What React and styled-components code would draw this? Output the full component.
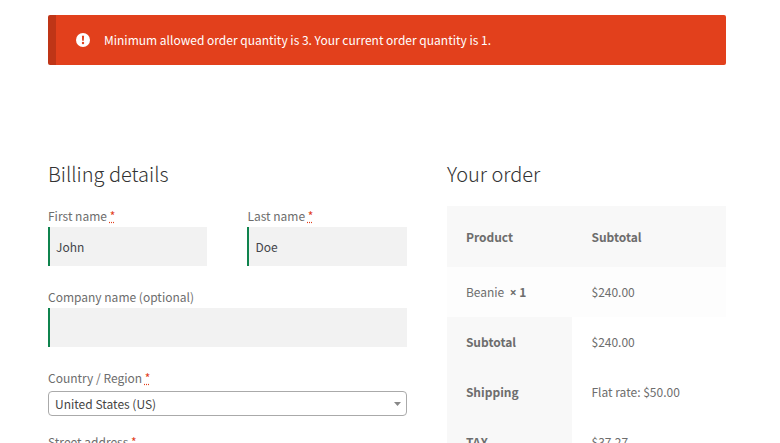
import React from "react";
import styled, { createGlobalStyle } from "styled-components";

const GlobalStyle = createGlobalStyle`
  *, *::before, *::after { box-sizing: border-box; }
  body {
    margin: 0;
    background: #fff;
    color: #6d6d6d;
    font-family: "Noto Sans CJK SC", "Noto Sans", sans-serif;
    font-size: 12px;
    line-height: 20px;
  }
`;

const Page = styled.main`
  height: 100vh;
  overflow: hidden;
  padding: 15px 54px 0 48px;
`;

const Notice = styled.div`
  display: flex;
  align-items: center;
  gap: 14px;
  min-height: 50px;
  padding: 0 20px;
  border-left: 8px solid #bf3517;
  border-radius: 2px;
  background: #e2401c;
  color: #fff;
`;

const NoticeIcon = styled.svg`
  flex: none;
  width: 14px;
  height: 14px;
`;

const Checkout = styled.form`
  display: grid;
  grid-template-columns: 9fr 7fr;
  gap: 40px;
  margin-top: 93px;
`;

const Section = styled.section`
  min-width: 0;
`;

const Heading = styled.h3`
  margin: 0 0 16px;
  color: #333;
  font-size: 20px;
  font-weight: 300;
  line-height: 32px;
`;

const Fields = styled.div`
  display: grid;
  grid-template-columns: 1fr 1fr;
  column-gap: 40px;
`;

const Field = styled.div`
  display: flex;
  flex-direction: column;
  min-width: 0;
  margin-bottom: ${({ $compact }) => ($compact ? "16px" : "21px")};
  grid-column: ${({ $wide }) => ($wide ? "1 / -1" : "auto")};
`;

const Label = styled.label`
  line-height: 20px;
  margin-bottom: ${({ $spaced }) => ($spaced ? "3px" : "1px")};
`;

const Required = styled.abbr`
  color: #e2401c;
  text-decoration: underline dotted;
`;

const TextInput = styled.input`
  width: 100%;
  height: 39px;
  padding: 0 6px;
  border: 0;
  border-left: 2px solid #0f834d;
  border-radius: 0;
  background: #f2f2f2;
  color: #43454b;
  font: inherit;
`;

const SelectWrap = styled.div`
  display: grid;
  align-items: center;
`;

const Select = styled.select`
  grid-area: 1 / 1;
  appearance: none;
  width: 100%;
  height: 25px;
  padding: 0 24px 0 6px;
  border: 1px solid #aaa;
  border-radius: 4px;
  background: #fff;
  color: #444;
  font: inherit;
`;

const SelectArrow = styled.svg`
  grid-area: 1 / 1;
  justify-self: end;
  width: 7px;
  height: 4px;
  margin-right: 6px;
  pointer-events: none;
`;

const OrderTable = styled.table`
  width: 100%;
  table-layout: fixed;
  border-collapse: collapse;
`;

const Cell = styled.td`
  height: ${({ $head }) => ($head ? "61px" : "50px")};
  padding: 0 19px;
  background: ${({ $tone }) => $tone || "#fff"};
  font-weight: ${({ $bold }) => ($bold ? 700 : 400)};
  text-align: left;
  vertical-align: middle;
  white-space: nowrap;
`;

const ProductColumn = styled.col`
  width: 45%;
`;

const Times = styled.span`
  font-family: "Open Sans", sans-serif;
`;

const totals = [
  ["Subtotal", "$240.00"],
  ["Shipping", "Flat rate: $50.00"],
  ["TAX", "$37.27"],
];

function FieldLabel({ id, text, required, spaced }) {
  return (
    <Label htmlFor={id} $spaced={spaced}>
      {text}
      {required && <> <Required title="required">*</Required></>}
    </Label>
  );
}

function TextField({ id, label, value, required, wide }) {
  return (
    <Field $wide={wide}>
      <FieldLabel id={id} text={label} required={required} />
      <TextInput id={id} type="text" defaultValue={value} />
    </Field>
  );
}

export default function App() {
  return (
    <>
      <GlobalStyle />
      <Page>
        <Notice role="alert">
          <NoticeIcon viewBox="0 0 14 14" aria-hidden="true">
            <circle cx="7" cy="7" r="7" fill="#fff" />
            <path d="M5.9 2.8h2.2l-.3 5H6.2z" fill="#e2401c" />
            <circle cx="7" cy="10" r="1.2" fill="#e2401c" />
          </NoticeIcon>
          <span>Minimum allowed order quantity is 3. Your current order quantity is 1.</span>
        </Notice>
        <Checkout>
          <Section>
            <Heading>Billing details</Heading>
            <Fields>
              <TextField id="first-name" label="First name" value="John" required />
              <TextField id="last-name" label="Last name" value="Doe" required />
              <TextField id="company" label="Company name (optional)" value="" wide />
              <Field $wide $compact>
                <FieldLabel id="country" text="Country / Region" required spaced />
                <SelectWrap>
                  <Select id="country" defaultValue="US">
                    <option value="US">United States (US)</option>
                  </Select>
                  <SelectArrow viewBox="0 0 7 4" aria-hidden="true">
                    <path d="M0 0h7L3.5 4z" fill="#888" />
                  </SelectArrow>
                </SelectWrap>
              </Field>
              <TextField id="street" label="Street address" value="" required wide />
            </Fields>
          </Section>
          <Section>
            <Heading>Your order</Heading>
            <OrderTable>
              <colgroup>
                <ProductColumn />
                <col />
              </colgroup>
              <thead>
                <tr>
                  <Cell as="th" scope="col" $head $bold $tone="#f8f8f8">Product</Cell>
                  <Cell as="th" scope="col" $head $bold $tone="#f8f8f8">Subtotal</Cell>
                </tr>
              </thead>
              <tbody>
                <tr>
                  <Cell $tone="#fdfdfd">Beanie&nbsp; <strong><Times>×</Times> 1</strong></Cell>
                  <Cell $tone="#fdfdfd">$240.00</Cell>
                </tr>
              </tbody>
              <tfoot>
                {totals.map(([name, amount]) => (
                  <tr key={name}>
                    <Cell as="th" scope="row" $bold $tone="#f8f8f8">{name}</Cell>
                    <Cell>{amount}</Cell>
                  </tr>
                ))}
              </tfoot>
            </OrderTable>
          </Section>
        </Checkout>
      </Page>
    </>
  );
}
